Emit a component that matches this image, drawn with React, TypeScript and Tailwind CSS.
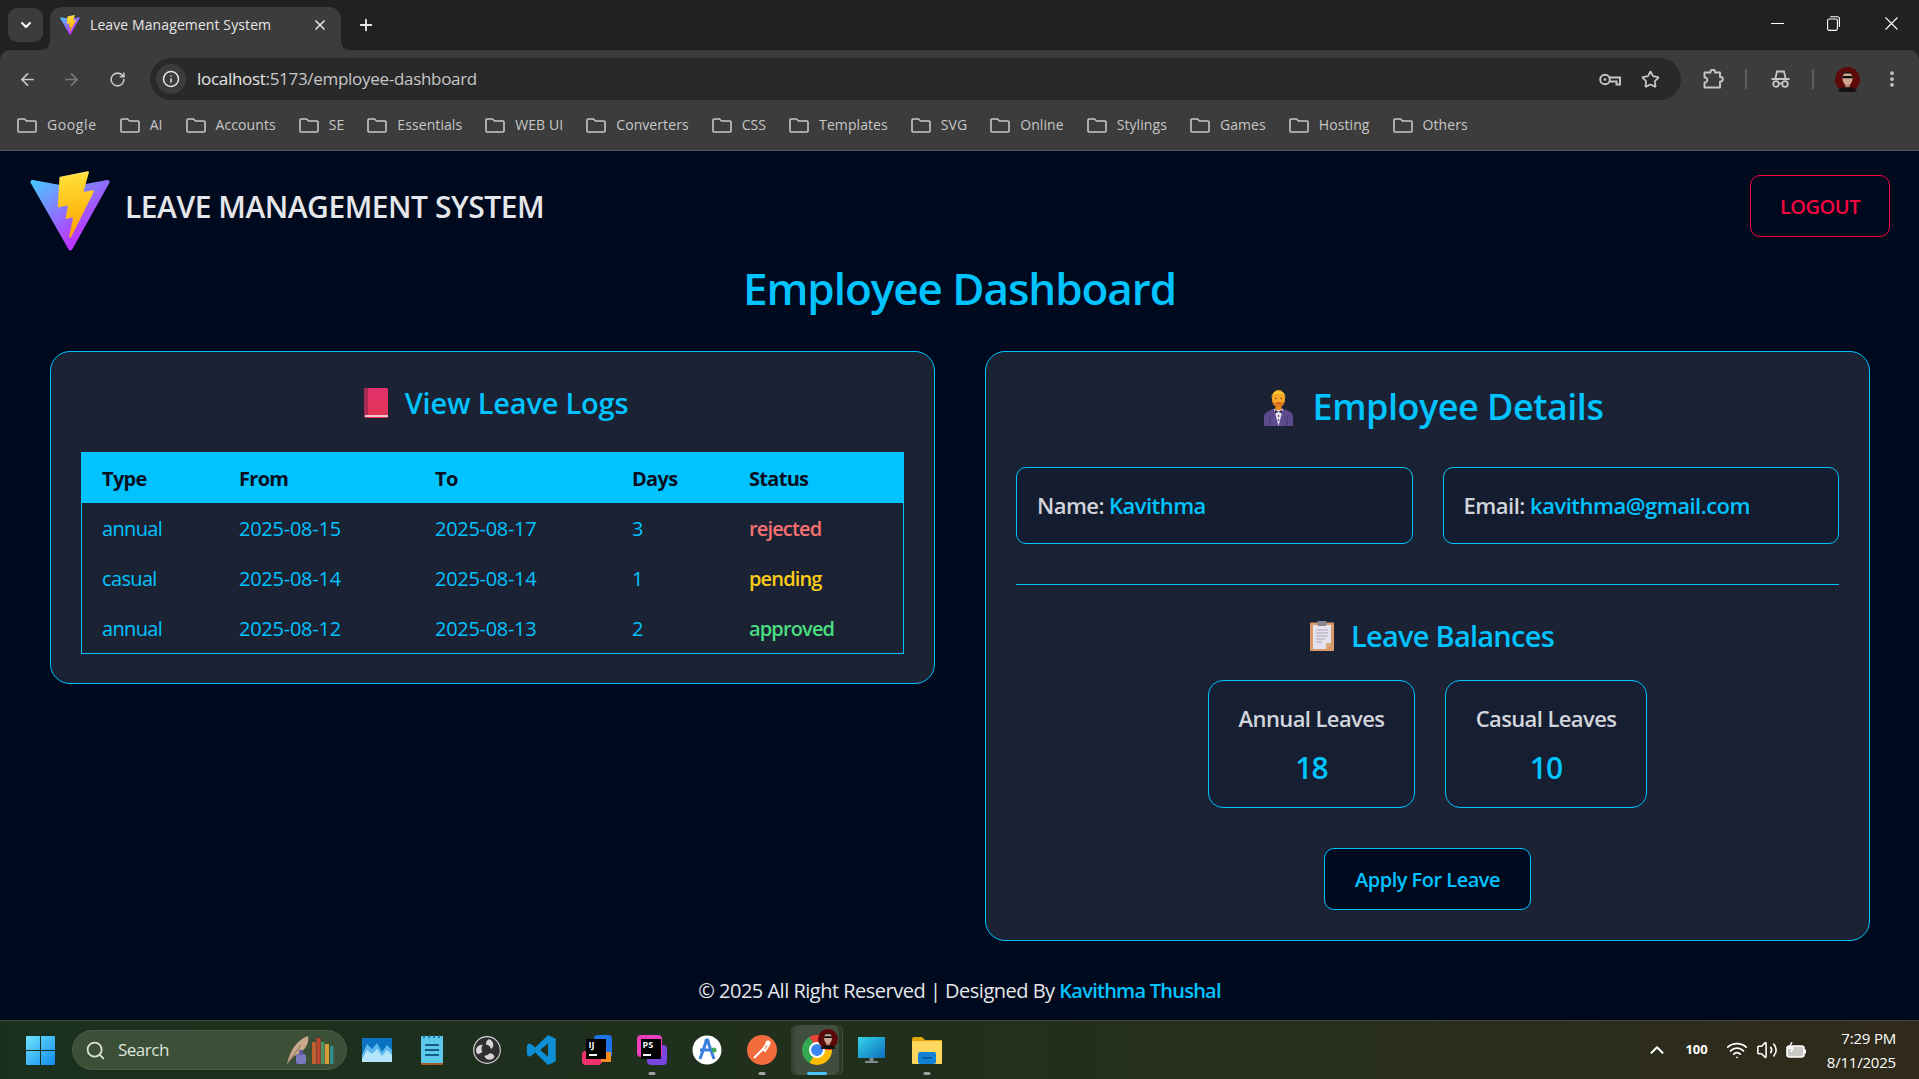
import React from "react";
import { ArrowLeft, ArrowRight, RotateCw, Info, X, Plus, ChevronDown, ChevronUp, Star, EllipsisVertical, Search, Wifi, Volume2 } from "lucide-react";

const bookmarks = ["Google","AI","Accounts","SE","Essentials","WEB UI","Converters","CSS","Templates","SVG","Online","Stylings","Games","Hosting","Others"];

function ViteLogo({ className, id }: { className: string; id: string }) {
  return (
    <svg className={className} viewBox="8 0 394 396" fill="none">
      <path d="M399.641 59.5246L215.643 388.545C211.844 395.338 202.084 395.378 198.228 388.618L10.5817 59.5563C6.38087 52.1896 12.6802 43.2665 21.0281 44.7586L205.223 77.6824C206.398 77.8924 207.601 77.8904 208.776 77.6763L389.119 44.8058C397.439 43.2894 403.768 52.1434 399.641 59.5246Z" fill={`url(#${id}a)`} />
      <path d="M292.965 1.5744L156.801 28.2552C154.563 28.6937 152.906 30.5903 152.771 32.8664L144.395 174.33C144.198 177.662 147.258 180.248 150.51 179.498L188.42 170.749C191.967 169.931 195.172 173.055 194.443 176.622L183.18 231.775C182.422 235.487 185.907 238.661 189.532 237.56L212.947 230.446C216.577 229.344 220.065 232.527 219.297 236.242L201.398 322.875C200.278 328.294 207.486 331.249 210.492 326.603L212.5 323.5L323.454 102.072C325.312 98.3645 322.108 94.1369 318.036 94.9228L279.014 102.454C275.347 103.161 272.227 99.746 273.262 96.1583L298.731 7.86689C299.767 4.27314 296.636 0.855181 292.965 1.5744Z" fill={`url(#${id}b)`} />
      <defs>
        <linearGradient id={`${id}a`} x1="6" y1="33" x2="235" y2="344" gradientUnits="userSpaceOnUse"><stop stopColor="#41D1FF" /><stop offset="1" stopColor="#BD34FE" /></linearGradient>
        <linearGradient id={`${id}b`} x1="194.65" y1="8.82" x2="236.08" y2="292.99" gradientUnits="userSpaceOnUse"><stop stopColor="#FFEA83" /><stop offset="0.083" stopColor="#FFDD35" /><stop offset="1" stopColor="#FFA800" /></linearGradient>
      </defs>
    </svg>
  );
}

function BookEmoji() {
  return (
    <svg className="w-[24px] h-[30px] shrink-0" viewBox="0 0 24 30">
      <defs><linearGradient id="bk" x1="0" y1="0" x2="0" y2="1"><stop stopColor="#e2336f" /><stop offset="1" stopColor="#e0344f" /></linearGradient></defs>
      <rect x="0" y="0" width="24" height="30" rx="1.5" fill="url(#bk)" />
      <rect x="0" y="0" width="4" height="30" fill="#a82a50" />
      <rect x="1" y="27" width="23" height="2" fill="#f3c6d6" />
    </svg>
  );
}

function PersonEmoji() {
  return (
    <svg className="w-[29px] h-[37px] shrink-0" viewBox="0 0 29 37">
      <path d="M0 37 V28 C0 23 5 22 10 19.5 H19 C24 22 29 23 29 28 V37 Z" fill="#5d4a8c" />
      <path d="M6 37 V27 M23 37 V27" stroke="#44376b" strokeWidth="1" />
      <path d="M10 20 L14.5 37 L19 20 Z" fill="#e6def2" />
      <path d="M11 21 L14.5 22.8 L18 21 V24.5 L14.5 22.8 L11 24.5 Z" fill="#2a2440" />
      <circle cx="14.5" cy="27" r="0.8" fill="#2a2440" /><circle cx="14.5" cy="31" r="0.8" fill="#2a2440" />
      <rect x="11.5" y="15" width="6" height="6" fill="#e98a1c" />
      <ellipse cx="14.5" cy="9.5" rx="6.6" ry="8.5" fill="#f7a82a" />
      <path d="M7.6 9 C6.5 0 22.5 0 21.4 9 L20.3 5.6 C17 4.4 12 4.4 8.7 5.6 Z" fill="#fcc72b" />
      <path d="M8.4 12 C9.5 14 19.5 14 20.6 12 C20.4 16 17.5 18.2 14.5 18.2 C11.5 18.2 8.6 16 8.4 12Z" fill="#de7f17" />
      <rect x="12.5" y="13.6" width="4" height="1.2" fill="#c8403a" />
      <circle cx="11.8" cy="9.5" r="0.7" fill="#5a3410" /><circle cx="17.2" cy="9.5" r="0.7" fill="#5a3410" />
    </svg>
  );
}

function ClipboardEmoji() {
  return (
    <svg className="w-[24px] h-[30px] shrink-0" viewBox="0 0 24 30">
      <rect x="0" y="1.5" width="24" height="28.5" rx="1" fill="#d99a6c" />
      <path d="M3 4 H21 V22 L16 28 H3 Z" fill="#e6e1ef" />
      <path d="M21 22 L16 28 V22 Z" fill="#e0a77a" />
      <rect x="7.5" y="0" width="9" height="5" rx="1" fill="#8a8791" />
      <path d="M6 9 H18 M6 12 H18 M6 15 H18 M6 18 H15 M6 21 H12" stroke="#aaa6b2" strokeWidth="1.2" />
    </svg>
  );
}

function FolderIcon() {
  return (
    <svg className="w-[20px] h-[15px] shrink-0" viewBox="0 0 20 15" fill="none" stroke="#c7c7c7" strokeWidth="1.6" strokeLinejoin="round">
      <path d="M1 2 Q1 1 2 1 H7.5 L9.5 3 H18 Q19 3 19 4 V13 Q19 14 18 14 H2 Q1 14 1 13 Z" />
    </svg>
  );
}

function KeyIcon() {
  return (
    <svg className="w-[22px] h-[13px]" viewBox="0 0 22 13" fill="none" stroke="#c7c7c7" strokeWidth="1.9">
      <circle cx="6" cy="6.5" r="4.8" />
      <circle cx="6" cy="6.5" r="1.3" fill="#c7c7c7" stroke="none" />
      <path d="M10.8 4.5 H21 V11.5 H17.5 V8.5 H10.8" />
    </svg>
  );
}

function IncognitoIcon() {
  return (
    <svg className="w-[19px] h-[18px]" viewBox="0 0 19 18" fill="none" stroke="#c7c7c7" strokeWidth="1.8">
      <path d="M4.5 8 L6 1.5 H13 L14.5 8" />
      <path d="M0.5 9 H18.5" strokeWidth="2" />
      <circle cx="5" cy="14" r="2.8" />
      <circle cx="14" cy="14" r="2.8" />
      <path d="M7.8 13.5 H11.2" />
    </svg>
  );
}

function ExtensionIcon() {
  return (
    <svg className="w-[21px] h-[20px]" viewBox="0 0 21 20" fill="none" stroke="#c7c7c7" strokeWidth="1.9" strokeLinejoin="round">
      <path d="M1.5 3.5 H7.5 V3 A2.2 2.2 0 0 1 12 3 V3.5 H17 V8 H17.6 A2.2 2.2 0 0 1 17.6 12.4 H17 V18.5 H1.5 V13.5 H2.5 A2.6 2.6 0 0 0 2.5 8.5 H1.5 Z" />
    </svg>
  );
}

function Avatar({ className }: { className: string }) {
  return (
    <svg className={className} viewBox="0 0 26 26">
      <circle cx="13" cy="13" r="13" fill="#5e0a0a" />
      <path d="M3 25 C6 19.5 20 19.5 23 25 C20 27 6 27 3 25Z" fill="#141111" />
      <rect x="10.5" y="15" width="5" height="6" fill="#b08670" />
      <ellipse cx="13" cy="12" rx="5.2" ry="7" fill="#cfa78f" />
      <path d="M7.6 9 C7.4 3.5 18.6 3.5 18.4 9 L17 6.8 H9 Z" fill="#1a1210" />
      <rect x="7.8" y="9.4" width="10.4" height="2.4" rx="1.1" fill="#0a0a0a" />
    </svg>
  );
}

function WinLogo() {
  return (
    <svg className="w-[29px] h-[29px]" viewBox="0 0 29 29">
      <defs><linearGradient id="wl" x1="0" y1="0" x2="1" y2="1"><stop stopColor="#6fe3fb" /><stop offset="1" stopColor="#0f8cf0" /></linearGradient></defs>
      <path d="M0 1 Q0 0 1 0 H14 V14 H0 Z M15 0 H28 Q29 0 29 1 V14 H15 Z M0 15 H14 V29 H1 Q0 29 0 28 Z M15 15 H29 V28 Q29 29 28 29 H15 Z" fill="url(#wl)" />
    </svg>
  );
}

function TaskIcon({ children, dot, active }: { children: React.ReactNode; dot?: boolean; active?: boolean }) {
  return (
    <div className="relative w-[55px] h-[50px] flex items-center justify-center">
      {active && <span className="absolute inset-y-0 left-[6px] right-[1px] rounded-md bg-white/5 border-r border-white/10" />}
      {active && <span className="absolute inset-y-0 left-[2px] right-[5px] rounded-md bg-white/10" />}
      <div className="relative flex">{children}</div>
      {dot && <span className="absolute bottom-[0px] left-1/2 -translate-x-1/2 w-[7px] h-[3px] rounded-full bg-[#a3a3a3]" />}
      {active && <span className="absolute bottom-[0px] left-1/2 -translate-x-1/2 w-[20px] h-[3px] rounded-full bg-[#4cc2ff]" />}
    </div>
  );
}

function Bookmark({ label }: { label: string }) {
  return (
    <div className="flex items-center gap-[10px]">
      <FolderIcon />
      <span className={`text-[14px] leading-[20px] text-[#c7c7c7] ${label === "Google" ? "tracking-[0.6px]" : "tracking-[0.08px]"}`}>{label}</span>
    </div>
  );
}

const rows = [
  { t: "annual", f: "2025-08-15", to: "2025-08-17", d: "3", s: "rejected", c: "text-[#f87171]" },
  { t: "casual", f: "2025-08-14", to: "2025-08-14", d: "1", s: "pending", c: "text-[#facc15]" },
  { t: "annual", f: "2025-08-12", to: "2025-08-13", d: "2", s: "approved", c: "text-[#4ade80]" },
];

export default function App() {
  return (
    <div className="w-[1919px] h-[1079px] overflow-hidden flex flex-col bg-[#000a1f] font-['Open_Sans','Noto_Sans',sans-serif]">
      <div className="shrink-0 bg-[#202221]">
        {/* tab strip */}
        <div className="h-[50px] flex items-end">
          <div className="w-[35px] h-[34px] ml-[8px] mb-[8px] rounded-[9px] bg-[#3c3c3c] flex items-center justify-center">
            <ChevronDown className="w-[16px] h-[16px] text-white" strokeWidth={3} />
          </div>
          <div className="relative w-[291px] h-[43px] ml-[7px] rounded-t-[12px] bg-[#3c3c3c] flex items-center pb-[7px] pl-[10px] pr-[13px] gap-[10px]">
            <svg className="absolute -left-[10px] bottom-0 w-[10px] h-[10px]" viewBox="0 0 10 10"><path d="M10 0 V10 H0 Q10 10 10 0Z" fill="#3c3c3c" /></svg>
            <svg className="absolute -right-[10px] bottom-0 w-[10px] h-[10px]" viewBox="0 0 10 10"><path d="M0 0 V10 H10 Q0 10 0 0Z" fill="#3c3c3c" /></svg>
            <ViteLogo className="w-[20px] h-[20px] shrink-0" id="tab" />
            <span className="flex-1 text-[14px] leading-[20px] text-[#e6e6e6] tracking-[0.1px] whitespace-nowrap">Leave Management System</span>
            <X className="w-[16px] h-[16px] text-[#e6e6e6]" strokeWidth={2.5} />
          </div>
          <Plus className="w-[18px] h-[18px] text-[#e6e6e6] ml-[16px] mb-[16px]" strokeWidth={2.5} />
          <div className="flex-1" />
          <div className="flex items-center mb-[19px]">
            <svg className="w-[13px] h-[13px]" viewBox="0 0 13 13" stroke="#fff" strokeWidth="1"><path d="M0 6.5 H13" /></svg>
            <svg className="ml-[43px] w-[13px] h-[15px]" viewBox="0 0 13 15" fill="none" stroke="#fff" strokeWidth="1.1"><rect x="0.6" y="3" width="9.8" height="11.4" rx="1.6" /><path d="M3.2 0.8 H10.5 Q12.4 0.8 12.4 2.8 V11" /></svg>
            <svg className="ml-[45px] mr-[21px] w-[13px] h-[13px]" viewBox="0 0 13 13" stroke="#fff" strokeWidth="1.1"><path d="M0.5 0.5 L12.5 12.5 M12.5 0.5 L0.5 12.5" /></svg>
          </div>
        </div>
        {/* toolbar */}
        <div className="h-[58px] bg-[#3c3c3c] flex items-center rounded-t-[10px]">
          <ArrowLeft className="w-[19px] h-[19px] ml-[18px] text-[#c7c7c7]" strokeWidth={2.2} />
          <ArrowRight className="w-[19px] h-[19px] ml-[25px] text-[#7a7a7a]" strokeWidth={2.2} />
          <RotateCw className="w-[17px] h-[17px] ml-[28px] text-[#c7c7c7]" strokeWidth={2.2} />
          <div className="w-[1531px] h-[42px] ml-[24px] rounded-full bg-[#292929] flex items-center pl-[6px] pr-[21px]">
            <div className="w-[30px] h-[30px] rounded-full bg-[#3c3c3c] flex items-center justify-center">
              <Info className="w-[18px] h-[18px] text-[#e6e6e6]" strokeWidth={2} />
            </div>
            <span className="ml-[11px] text-[17px] text-[#e6e6e6] tracking-[-0.3px]">localhost<span className="text-[#c7c7c7]">:5173/employee-dashboard</span></span>
            <div className="flex-1" />
            <KeyIcon />
            <Star className="w-[19px] h-[19px] ml-[20px] text-[#c7c7c7]" strokeWidth={2.2} />
          </div>
          <div className="ml-[22px] flex"><ExtensionIcon /></div>
          <div className="w-[2px] h-[20px] bg-[#5c5c5c] ml-[21px]" />
          <div className="ml-[24px] flex"><IncognitoIcon /></div>
          <div className="w-[2px] h-[20px] bg-[#5c5c5c] ml-[22px]" />
          <Avatar className="w-[25px] h-[25px] ml-[21px]" />
          <EllipsisVertical className="w-[20px] h-[20px] ml-[22px] text-[#c7c7c7]" strokeWidth={2.5} />
        </div>
        {/* bookmarks */}
        <div className="h-[43px] bg-[#3c3c3c] border-b border-[#55595c] flex items-center gap-[23px] pl-[17px] pb-[8px]">
          {bookmarks.map((b) => <Bookmark key={b} label={b} />)}
        </div>
      </div>

      {/* page */}
      <div className="flex-1 min-h-0 flex flex-col bg-[#000a1f]">
        <header className="h-[112px] shrink-0 pt-[20px] pl-[30px] pr-[29px] flex items-start justify-between">
          <div className="flex items-center gap-[15px]">
            <ViteLogo className="w-[80px] h-[80px]" id="hdr" />
            <span className="text-[30px] font-semibold text-[#e5e7eb] tracking-[-0.48px] mb-[9px]">LEAVE MANAGEMENT SYSTEM</span>
          </div>
          <button className="w-[140px] h-[62px] mt-[4px] pt-[1px] rounded-[10px] border border-[#f6053f] text-[#f6053f] text-[20px] font-semibold tracking-[-0.5px]">LOGOUT</button>
        </header>
        <h1 className="text-center text-[#00c3ff] text-[44px] leading-[60px] font-semibold tracking-[-1.05px] -mt-[5px]">Employee Dashboard</h1>
        <main className="mt-[33px] pl-[50px] pr-[49px] flex items-start justify-between">
          <section className="w-[885px] rounded-[20px] border border-[#00c3ff] bg-[#1a2234] px-[30px] pt-[31px] pb-[29px]">
            <h2 className="flex items-center justify-center gap-[17px] ml-[7px] text-[29px] leading-[40px] font-semibold text-[#00c3ff] tracking-[-0.2px]"><BookEmoji />View Leave Logs</h2>
            <div className="mt-[29px] border border-[#00c3ff]">
              <div className="grid grid-cols-[137px_196px_197px_117px_1fr] pl-[20px] pt-[2px] h-[50px] items-center bg-[#00c3ff] text-[#0a0f1f] text-[20px] font-bold tracking-[-0.7px]">
                <span>Type</span><span>From</span><span>To</span><span>Days</span><span>Status</span>
              </div>
              {rows.map((r) => (
                <div key={r.f} className="grid grid-cols-[137px_196px_197px_117px_1fr] pl-[20px] pt-[2px] h-[50px] items-center text-[#00c3ff] text-[20px] tracking-[-0.65px]">
                  <span>{r.t}</span><span className="tracking-[-0.25px]">{r.f}</span><span className="tracking-[-0.3px]">{r.to}</span><span>{r.d}</span><span className={`font-semibold tracking-[-0.85px] ${r.c}`}>{r.s}</span>
                </div>
              ))}
            </div>
          </section>
          <section className="w-[885px] rounded-[20px] border border-[#00c3ff] bg-[#1a2234] px-[30px] pt-[30px] pb-[30px]">
            <h2 className="flex items-center justify-center gap-[20px] ml-[12px] text-[36px] leading-[50px] font-semibold text-[#00c3ff] tracking-[-0.5px]"><PersonEmoji />Employee Details</h2>
            <div className="mt-[35px] grid grid-cols-2 gap-[30px]">
              <div className="h-[77px] rounded-[10px] border border-[#00c3ff] bg-[#141c30] flex items-center pl-[20px] text-[22px] font-semibold text-[#d1d5db] tracking-[-0.55px]">Name:&nbsp;<span className="text-[#00c3ff]">Kavithma</span></div>
              <div className="h-[77px] rounded-[10px] border border-[#00c3ff] bg-[#141c30] flex items-center pl-[20px] text-[22px] font-semibold text-[#d1d5db] tracking-[-0.5px]">Email:&nbsp;<span className="text-[#00c3ff]">kavithma@gmail.com</span></div>
            </div>
            <div className="mt-[40px] h-px bg-[#00c3ff]" />
            <h3 className="mt-[31px] ml-[9px] flex items-center justify-center gap-[17px] text-[29px] leading-[40px] font-semibold text-[#00c3ff] tracking-[-0.75px]"><ClipboardEmoji />Leave Balances</h3>
            <div className="mt-[24px] flex justify-center gap-[30px]">
              <div className="w-[207px] h-[128px] rounded-[15px] border border-[#00c3ff] bg-[#161e32] flex flex-col items-center pt-[21px]">
                <span className="text-[22px] leading-[32px] font-semibold text-[#d1d5db] tracking-[-0.6px]">Annual Leaves</span>
                <span className="mt-[18px] text-[30px] leading-[32px] font-semibold text-[#00c3ff] tracking-[-1px]">18</span>
              </div>
              <div className="w-[202px] h-[128px] rounded-[15px] border border-[#00c3ff] bg-[#161e32] flex flex-col items-center pt-[21px]">
                <span className="text-[22px] leading-[32px] font-semibold text-[#d1d5db] tracking-[-0.6px]">Casual Leaves</span>
                <span className="mt-[18px] text-[30px] leading-[32px] font-semibold text-[#00c3ff] tracking-[-1px]">10</span>
              </div>
            </div>
            <div className="mt-[40px] flex justify-center">
              <button className="w-[207px] h-[62px] pt-[1px] rounded-[10px] border border-[#00c3ff] bg-[#000a1f] text-[#00c3ff] text-[20px] font-semibold tracking-[-0.5px]">Apply For Leave</button>
            </div>
          </section>
        </main>
        <footer className="mt-[35px] text-center text-[20px] leading-[30px] text-[#e5e7eb] tracking-[-0.5px]">© 2025 All Right Reserved | Designed By <span className="font-semibold text-[#00c3ff] tracking-[-0.75px]">Kavithma Thushal</span></footer>
      </div>

      {/* taskbar */}
      <div className="h-[59px] shrink-0 border-t border-[#44483e] bg-gradient-to-r from-[#1a301e] via-[#21301c] to-[#302a1b] flex items-center">
        <div className="ml-[26px] flex"><WinLogo /></div>
        <div className="ml-[17px] w-[275px] h-[40px] rounded-full bg-[#3c5038] border border-[#4a5c46] flex items-center pl-[12px] pr-[10px] text-[#dfe3dc]">
          <Search className="w-[21px] h-[21px]" strokeWidth={2} />
          <span className="ml-[12px] text-[17px] tracking-[-0.5px]">Search</span>
          <div className="flex-1" />
          <svg className="w-[50px] h-[30px]" viewBox="0 0 50 30">
            <path d="M1 29 C4 15 11 5 22 1 C24 8 18 18 8 21Z" fill="#c8a98c" />
            <path d="M1 29 L15 10" stroke="#8a6e58" strokeWidth="1" />
            <rect x="10" y="19" width="10" height="10" rx="2.5" fill="#7b78c0" />
            <rect x="13" y="15" width="4" height="5" fill="#5f5ca0" />
            <rect x="26" y="7" width="4" height="22" fill="#c0602e" />
            <rect x="30.5" y="3" width="4" height="26" fill="#c0452e" />
            <rect x="35" y="7" width="3.5" height="22" fill="#4d9460" />
            <rect x="39" y="9" width="4" height="20" fill="#d89b36" />
            <rect x="44" y="11" width="3.5" height="18" fill="#2f8f88" />
          </svg>
        </div>
        <div className="ml-[2px] flex items-center">
          <TaskIcon><svg className="w-[30px] h-[24px]" viewBox="0 0 30 24"><rect width="30" height="24" fill="#0a72c0" /><path d="M0 17 L5 6 L10 11 L15 5 L20 14 L25 7 L30 12 V24 H0 Z" fill="#5db8ee" /><path d="M0 21 L5 12 L10 16 L15 11 L20 18 L25 12 L30 17 V24 H0 Z" fill="#b4e6fb" /></svg></TaskIcon>
          <TaskIcon><svg className="w-[22px] h-[30px]" viewBox="0 0 22 30"><rect y="1" width="22" height="29" rx="1" fill="#a85a28" /><rect y="1" width="22" height="27" rx="1" fill="#5cc8ec" /><path d="M4 10 H18 M4 15 H18 M4 20 H18" stroke="#135f86" strokeWidth="2" /><path d="M3 0 V3 M8 0 V3 M13 0 V3 M18 0 V3" stroke="#135f86" strokeWidth="1.5" /></svg></TaskIcon>
          <TaskIcon><svg className="w-[28px] h-[28px]" viewBox="0 0 30 30"><circle cx="15" cy="15" r="14.3" fill="#302e31" stroke="#d6d6d6" strokeWidth="1.2" /><path d="M17 3.5 A6 6 0 0 1 19.5 14 A7 7 0 0 0 14 9 A5.5 5.5 0 0 1 17 3.5Z M4.5 19 A6 6 0 0 1 10.5 9.5 A7 7 0 0 0 10 17 A5.5 5.5 0 0 1 4.5 19Z M23 22.5 A6 6 0 0 1 12 21 A7 7 0 0 0 18 18.5 A5.5 5.5 0 0 1 23 22.5Z" fill="#d6d6d6" /></svg></TaskIcon>
          <TaskIcon><svg className="w-[31px] h-[32px]" viewBox="0 0 100 100"><path d="M71 2 L96 14 V86 L71 98 L30 58 L12 72 L3 66 V34 L12 28 L30 42Z M71 28 L46 50 L71 72Z" fill="#0d8fd8" fillRule="evenodd" /></svg></TaskIcon>
          <TaskIcon><div className="relative w-[30px] h-[30px]"><div className="absolute right-0 top-0 w-[18px] h-[23px] rounded-sm bg-[#1c74e8]" /><div className="absolute left-0 bottom-0 w-[20px] h-[14px] rounded-sm bg-[#f0336c]" /><div className="absolute right-[1px] bottom-[3px] w-[10px] h-[10px] bg-[#f98a1e]" /><div className="absolute left-[4px] top-[4px] w-[20px] h-[20px] bg-black text-white text-[9px] leading-[12px] font-bold pl-[3px]">IJ<div className="w-[8px] h-[1.5px] bg-white mt-[3px]" /></div></div></TaskIcon>
          <TaskIcon dot><div className="relative w-[30px] h-[30px]"><div className="absolute right-0 bottom-0 w-[20px] h-[20px] rounded-sm bg-[#7b45e0]" /><div className="absolute left-0 top-0 w-[25px] h-[22px] rounded-sm bg-[#ec3fc0]" /><div className="absolute left-[4px] top-[4px] w-[20px] h-[20px] bg-black text-white text-[9px] leading-[12px] font-bold pl-[2px]">PS<div className="w-[8px] h-[1.5px] bg-white mt-[3px]" /></div></div></TaskIcon>
          <TaskIcon><svg className="w-[30px] h-[30px]" viewBox="0 0 30 30"><circle cx="15" cy="15" r="14.5" fill="#fff" /><path d="M15 4 L8 24 M15 4 L22 24 M8 15 H22" stroke="#3b7ddc" strokeWidth="3" fill="none" /><circle cx="15" cy="6" r="2.5" fill="#3b7ddc" /><circle cx="22" cy="15" r="2.5" fill="#3ea65a" /></svg></TaskIcon>
          <TaskIcon dot><svg className="w-[30px] h-[30px]" viewBox="0 0 30 30"><circle cx="15" cy="15" r="15" fill="#f36c3d" /><path d="M7 23 L16 14 L20 8 M16 14 L18 16 L22 10" stroke="#fff" strokeWidth="2" fill="none" /><circle cx="21" cy="8" r="2.5" fill="#fff" /></svg></TaskIcon>
          <TaskIcon active><div className="relative w-[30px] h-[30px]"><div className="w-[30px] h-[30px] rounded-full bg-[conic-gradient(from_-30deg,#ea4335_0deg_120deg,#fbbc04_120deg_240deg,#34a853_240deg_360deg)] flex items-center justify-center"><div className="w-[16px] h-[16px] rounded-full bg-[#3a86f0] border-[2.5px] border-white" /></div><Avatar className="absolute -right-[6px] -top-[6px] w-[20px] h-[20px]" /></div></TaskIcon>
          <TaskIcon><svg className="w-[27px] h-[26px]" viewBox="0 0 27 26"><defs><linearGradient id="mon" x1="0" y1="0" x2="1" y2="1"><stop stopColor="#32d4ea" /><stop offset="1" stopColor="#0e6fbe" /></linearGradient></defs><rect width="27" height="21" fill="url(#mon)" /><rect x="11.5" y="21" width="4" height="3" fill="#7e8a90" /><rect x="7" y="24" width="13" height="2" fill="#7e8a90" /></svg></TaskIcon>
          <TaskIcon dot><svg className="w-[30px] h-[27px]" viewBox="0 0 30 27"><path d="M0 2 Q0 0 2 0 H10 L13 3 H30 V26 H0Z" fill="#e0a30a" /><rect y="4" width="30" height="23" rx="1" fill="#ffd75e" /><rect x="6" y="15" width="18" height="12" rx="2" fill="#1282d8" /><rect x="10" y="20" width="10" height="1.5" fill="#0a4f86" /></svg></TaskIcon>
        </div>
        <div className="flex-1" />
        <ChevronUp className="w-[22px] h-[22px] text-white" strokeWidth={2.2} />
        <span className="ml-[17px] text-[13px] font-bold text-white">100</span>
        <Wifi className="ml-[18px] w-[22px] h-[22px] text-white" strokeWidth={2} />
        <Volume2 className="ml-[8px] w-[22px] h-[22px] text-white" strokeWidth={1.7} />
        <svg className="ml-[8px] w-[21px] h-[17px]" viewBox="0 0 21 17" fill="none" stroke="#fff" strokeWidth="1.6"><rect x="1" y="4" width="17" height="11" rx="2.5" fill="#fff" fillOpacity="0.75" /><rect x="18" y="7.5" width="2" height="4" fill="#fff" stroke="none" /><path d="M6 0 L3 6 H7 L5 10" strokeWidth="1.4" /></svg>
        <div className="ml-[20px] mr-[23px] text-right text-[15px] leading-[24px] text-white tracking-[-0.2px]">
          <div>7:29 PM</div>
          <div>8/11/2025</div>
        </div>
      </div>
    </div>
  );
}
